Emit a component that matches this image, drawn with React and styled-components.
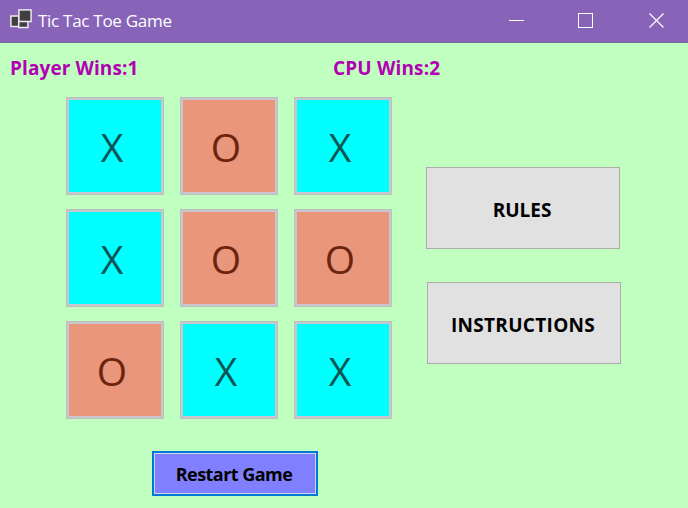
import React from 'react';
import styled, { createGlobalStyle } from 'styled-components';

const Global = createGlobalStyle`
  * { box-sizing: border-box; }
  body { margin: 0; background: #c0ffc0; }
  button { font-family: inherit; padding: 0; margin: 0; }
`;

const Window = styled.div`
  width: 688px;
  height: 508px;
  overflow: hidden;
  background: #c0ffc0;
  font-family: 'Open Sans', 'Noto Sans', sans-serif;
`;

const TitleBar = styled.header`
  display: flex;
  align-items: center;
  height: 43px;
  padding-left: 10px;
  background: #8764b8;
  border-bottom: 1px solid #77699f;
  color: #fff;
`;

const Title = styled.h1`
  flex: 1;
  margin: 0 0 0 6px;
  font-size: 17px;
  font-weight: 400;
  line-height: 42px;
  letter-spacing: -0.28px;
`;

const AppIcon = styled.svg`
  display: block;
  margin-bottom: 4px;
`;

const Controls = styled.div`
  display: grid;
  grid-template-columns: 69px 71px 16px;
  padding-right: 23px;
  margin-bottom: 1px;
`;

const ControlIcon = styled.svg`
  display: block;
  fill: none;
  stroke: #fff;
`;

const Scores = styled.div`
  display: grid;
  grid-template-columns: 323px 1fr;
  height: 54px;
  padding: 12px 0 0 10px;
`;

const Score = styled.div`
  color: #b400b4;
  font-size: 19px;
  font-weight: 700;
  line-height: 26px;
  letter-spacing: ${(p) => p.$spacing};
`;

const Main = styled.main`
  display: flex;
  align-items: flex-start;
  padding-left: 66px;
`;

const Board = styled.div`
  display: grid;
  grid-template-columns: repeat(3, 98px);
  grid-auto-rows: 98px;
  gap: 14px 16px;
`;

const Cell = styled.button`
  display: flex;
  align-items: center;
  justify-content: center;
  padding: 2px 6px 0 0;
  border: 1px solid #bfbfbf;
  box-shadow: inset 0 0 0 2px #c6c8cc;
  background: ${(p) => (p.$mark === 'X' ? '#00ffff' : '#e9967a')};
  color: ${(p) => (p.$mark === 'X' ? '#0b5555' : '#6b2410')};
  font-size: 39px;
  line-height: 50px;
`;

const SideMenu = styled.nav`
  display: grid;
  gap: 33px;
  margin: 70px 0 0 34px;
`;

const MenuButton = styled.button`
  width: 194px;
  height: 82px;
  margin-left: ${(p) => p.$indent || 0}px;
  padding-top: 3px;
  padding-right: 2px;
  border: 1px solid #adadad;
  background: #e1e1e1;
  color: #000;
  font-size: 19px;
  font-weight: 700;
  letter-spacing: ${(p) => p.$spacing};
`;

const RestartButton = styled.button`
  display: block;
  width: 166px;
  height: 45px;
  margin: 32px 0 0 152px;
  padding: 1px 2px 0 0;
  border: 2px solid #0078d7;
  box-shadow: inset 0 0 0 1px #d4d4f4;
  background: #8080ff;
  color: #000;
  font-size: 18px;
  font-weight: 700;
  letter-spacing: -0.55px;
`;

const marks = ['X', 'O', 'X', 'X', 'O', 'O', 'O', 'X', 'X'];

export default function App() {
  return (
    <>
      <Global />
      <Window>
        <TitleBar>
          <AppIcon width="22" height="20" viewBox="0 0 22 20" fill="#404040" stroke="#eee6f5" strokeWidth="1.5">
            <rect x="0.9" y="7" width="8" height="10.5" />
            <rect x="8.7" y="11.5" width="9.2" height="7" />
            <rect x="8.9" y="0.9" width="12.2" height="11.6" />
          </AppIcon>
          <Title>Tic Tac Toe Game</Title>
          <Controls>
            <ControlIcon width="15" height="15"><path d="M0 7.5H15" /></ControlIcon>
            <ControlIcon width="15" height="15"><rect x="0.5" y="0.5" width="14" height="14" /></ControlIcon>
            <ControlIcon width="16" height="15"><path d="M0.5 0.5L14.5 14.5M14.5 0.5L0.5 14.5" strokeWidth="1.2" /></ControlIcon>
          </Controls>
        </TitleBar>
        <Scores>
          <Score $spacing="0.1px">Player Wins:1</Score>
          <Score $spacing="0.15px">CPU Wins:2</Score>
        </Scores>
        <Main>
          <Board>
            {marks.map((mark, i) => (
              <Cell key={i} $mark={mark}>{mark}</Cell>
            ))}
          </Board>
          <SideMenu>
            <MenuButton $spacing="0px">RULES</MenuButton>
            <MenuButton $indent={1} $spacing="0.3px">INSTRUCTIONS</MenuButton>
          </SideMenu>
        </Main>
        <RestartButton>Restart Game</RestartButton>
      </Window>
    </>
  );
}
